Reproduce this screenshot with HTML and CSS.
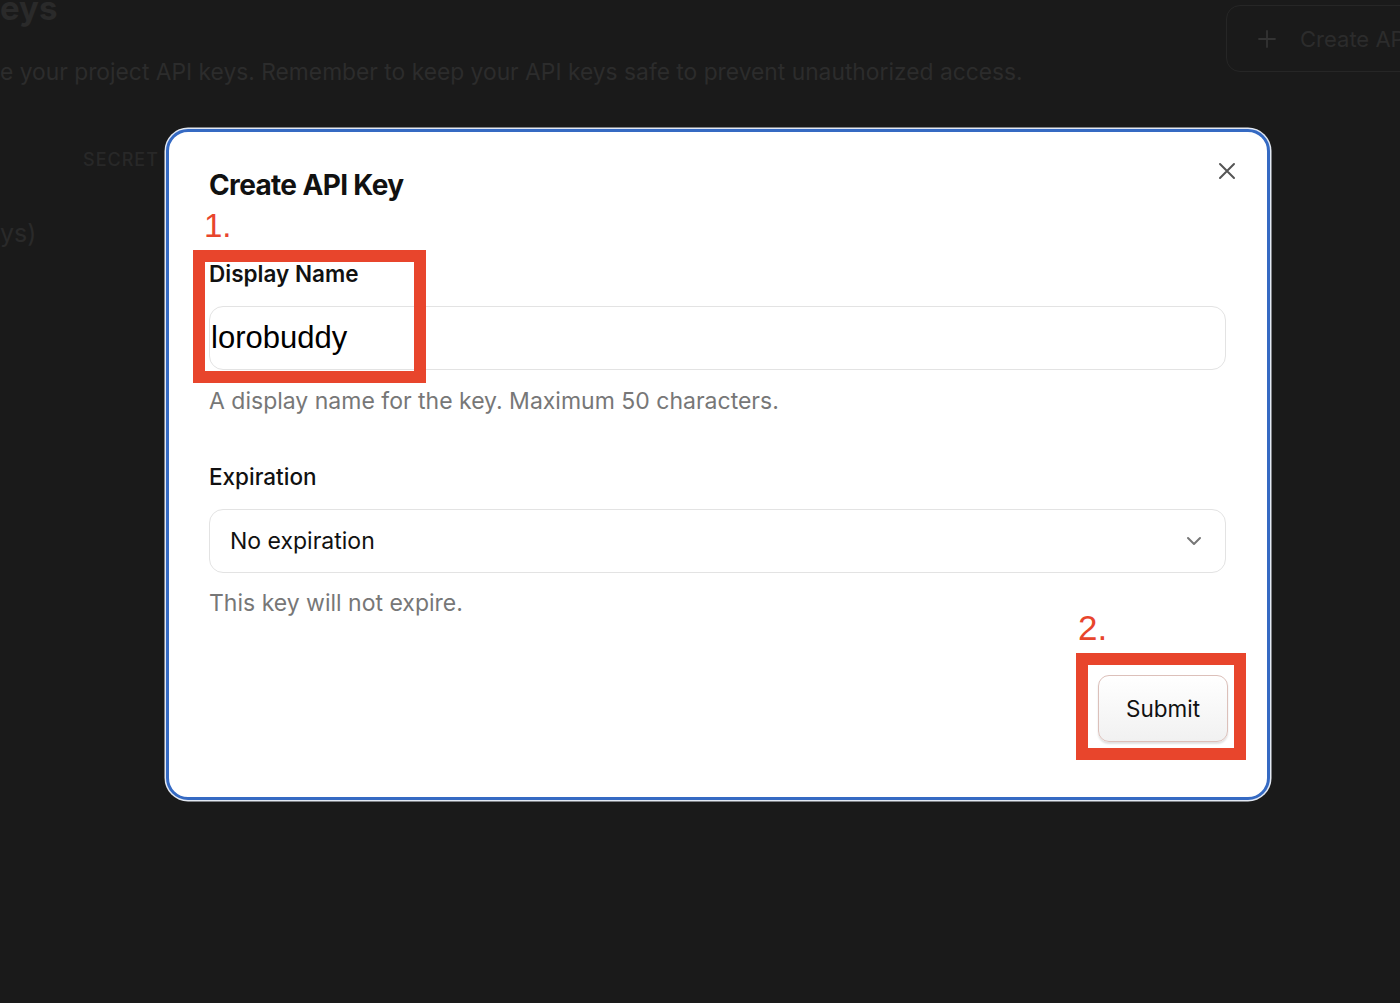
FILE: index.html
```html
<!DOCTYPE html>
<html lang="en">
<head>
<meta charset="utf-8">
<title>Create API Key</title>
<link rel="stylesheet" href="styles.css">
</head>
<body>
<div class="page">
  <header class="topbar">
    <div class="intro">
      <h1 class="page-title">eys</h1>
      <p class="page-sub">e your project API keys. Remember to keep your API keys safe to prevent unauthorized access.</p>
    </div>
    <div class="create-btn">
      <svg class="plus" width="18" height="18" viewBox="0 0 18 18"><path d="M9 1v16M1 9h16" stroke="#333" stroke-width="1.8" fill="none" stroke-linecap="round"/></svg>
      <span>Create API Key</span>
    </div>
  </header>
  <div class="table-head"><span>SECRET KEY</span></div>
  <div class="table-row"><span>ys)</span></div>

  <div class="modal">
    <button class="close" aria-label="Close">
      <svg width="18" height="18" viewBox="0 0 18 18"><path d="M2 2l14 14M16 2L2 16" stroke="#555" stroke-width="2" fill="none" stroke-linecap="round"/></svg>
    </button>
    <h2 class="modal-title">Create API Key</h2>

    <div class="field field-name">
      <label class="label">Display Name</label>
      <div class="input input-name">lorobuddy</div>
      <p class="help">A display name for the key. Maximum 50 characters.</p>
    </div>

    <div class="field field-exp">
      <label class="label">Expiration</label>
      <div class="input select">
        <span>No expiration</span>
        <svg class="chev" width="16" height="10" viewBox="0 0 16 10"><path d="M2 2l6 6 6-6" stroke="#777" stroke-width="2" fill="none" stroke-linecap="round" stroke-linejoin="round"/></svg>
      </div>
      <p class="help help-exp">This key will not expire.</p>
    </div>

    <div class="footer">
      <button class="submit">Submit</button>
    </div>

    <span class="mark mark-1">1.</span>
    <div class="box box-1"></div>
    <span class="mark mark-2">2.</span>
    <div class="box box-2"></div>
  </div>
</div>
</body>
</html>
```
FILE: styles.css
```css
html, body {
  margin: 0;
  padding: 0;
}
body {
  background: #1a1a1a;
  font-family: Inter, "Noto Sans", sans-serif;
  overflow: hidden;
  height: 1003px;
}
.page {
  position: relative;
  height: 1003px;
  overflow: hidden;
}
.topbar {
  display: flex;
  justify-content: space-between;
  align-items: flex-start;
}
.page-title {
  margin: -11px 0 0;
  font-size: 33px;
  line-height: 38px;
  font-weight: 700;
  color: #2a2a2a;
}
.page-sub {
  margin: 30px 0 0;
  font-size: 22.8px;
  line-height: 30px;
  color: #2c2c2c;
  white-space: nowrap;
}
.create-btn {
  margin-top: 5px;
  margin-right: -60px;
  width: 234px;
  height: 67px;
  box-sizing: border-box;
  border: 1px solid #262626;
  border-radius: 14px;
  display: flex;
  align-items: center;
  gap: 24px;
  padding-left: 31px;
  color: #2c2c2c;
  font-size: 22px;
  white-space: nowrap;
  flex-shrink: 0;
}
.table-head {
  margin-top: 62px;
  padding-left: 83px;
  font-size: 18px;
  font-weight: 500;
  letter-spacing: 1px;
  color: #282828;
}
.table-row {
  margin-top: 48px;
  font-size: 25px;
  color: #2a2a2a;
}

/* modal */
.modal {
  position: absolute;
  left: 166px;
  top: 129px;
  width: 1104px;
  height: 671px;
  box-sizing: border-box;
  background: #fff;
  border: 3px solid #356ac3;
  border-radius: 22px;
  box-shadow: 0 0 0 1.5px #e3e9f3;
  padding: 36px 41px 0 40px;
}
.close {
  position: absolute;
  top: 30px;
  right: 31px;
  width: 18px;
  height: 18px;
  padding: 0;
  border: none;
  background: none;
  display: flex;
}
.modal-title {
  margin: 0;
  font-size: 28px;
  line-height: 34px;
  font-weight: 700;
  color: #111;
  letter-spacing: -0.65px;
}
.field-name {
  margin-top: 60px;
}
.field-exp {
  margin-top: 49px;
}
.label {
  display: block;
  font-size: 22.5px;
  line-height: 24px;
  font-weight: 500;
  color: #111;
}
.field-name .label {
  font-weight: 600;
}
.input {
  margin-top: 20px;
  height: 64px;
  box-sizing: border-box;
  border: 1px solid #e3e3e3;
  border-radius: 14px;
  display: flex;
  align-items: center;
}
.input-name {
  padding-left: 1px;
  font-family: "Liberation Sans", Arial, sans-serif;
  font-size: 31px;
  color: #000;
}
.select {
  padding: 0 23px 0 20px;
  justify-content: space-between;
  font-size: 23px;
  color: #111;
}
.help {
  margin: 16px 0 0;
  font-size: 23px;
  line-height: 30px;
  color: #777;
}
.help-exp {
  margin-top: 15px;
}
.footer {
  display: flex;
  justify-content: flex-end;
  margin-top: 57px;
  margin-right: -2px;
}
.submit {
  width: 130px;
  height: 67px;
  box-sizing: border-box;
  border: 1.5px solid #dcc0ba;
  border-radius: 11px;
  background: linear-gradient(#ffffff, #f1f1f1);
  box-shadow: 0 2px 2px rgba(0,0,0,0.12);
  font-family: Inter, sans-serif;
  font-size: 22.5px;
  color: #111;
}

/* annotations */
.mark {
  position: absolute;
  font-family: "Liberation Sans", Arial, sans-serif;
  color: #e8452c;
}
.mark-1 {
  left: 35px;
  top: 77px;
  font-size: 33px;
  line-height: 33px;
}
.mark-2 {
  left: 909px;
  top: 478px;
  font-size: 35px;
  line-height: 35px;
}
.box {
  position: absolute;
  box-sizing: border-box;
  border: 12px solid #e8452c;
}
.box-1 {
  left: 24px;
  top: 118px;
  width: 233px;
  height: 133px;
}
.box-2 {
  left: 907px;
  top: 521px;
  width: 170px;
  height: 107px;
}
```
